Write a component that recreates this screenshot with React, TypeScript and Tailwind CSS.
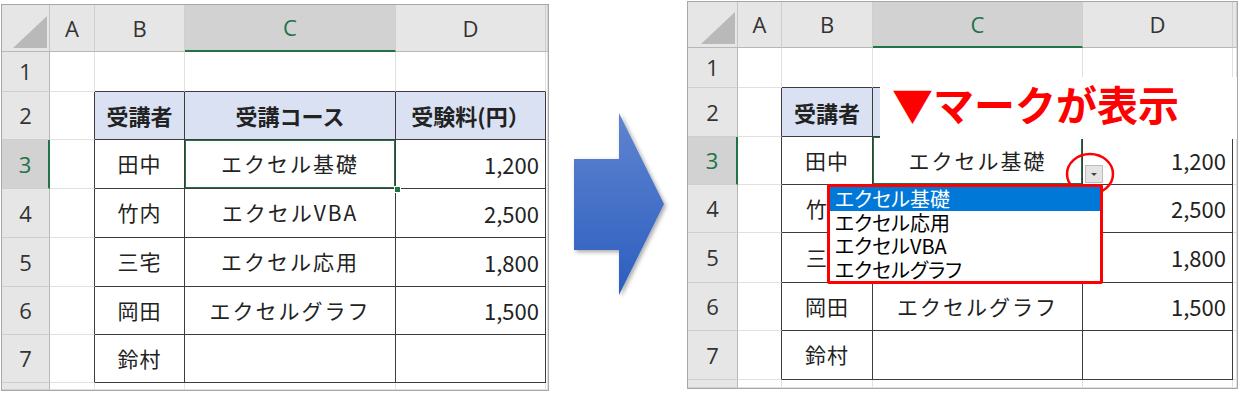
const names = ["田中", "竹内", "三宅", "岡田", "鈴村"];
const courses = ["エクセル基礎", "エクセルVBA", "エクセル応用", "エクセルグラフ", ""];
const fees = ["1,200", "2,500", "1,800", "1,500", ""];
const letters = ["", "A", "B", "C", "D", ""];
const options = ["エクセル基礎", "エクセル応用", "エクセルVBA", "エクセルグラフ"];

const jp = "font-['Noto_Sans_CJK_JP',sans-serif]";
const ui = "font-['Open_Sans','Noto_Sans_CJK_JP',sans-serif]";

function Corner() {
  return (
    <div className="flex h-full w-full items-end justify-end pb-[3px] pr-[2px]">
      <svg width="34" height="32" viewBox="0 0 34 32">
        <polygon points="0,32 34,32 34,0" fill="#b9b9b9" />
      </svg>
    </div>
  );
}

// rows 4-5 of the right sheet sit half under the open list
function Cell({ r, c, covered }: { r: number; c: number; covered?: boolean }) {
  const isHead = r === 0;
  const isRowHead = c === 0;
  const rightDark = r >= 2 && r <= 7 && c >= 1 && c <= 4;
  const bottomDark = r >= 1 && r <= 7 && c >= 2 && c <= 4;
  const tableHead = r === 2 && c >= 2 && c <= 4;
  const underList = covered && (r === 4 || r === 5);
  const underTitle = covered && r === 2 && c > 2;

  let cls = "relative flex items-center overflow-hidden ";
  let content: React.ReactNode = null;

  if (isHead && isRowHead) {
    cls += "border-r border-b border-r-[#c4c4c4] border-b-[#b8b8b8] bg-[#e6e6e6]";
    content = <Corner />;
  } else if (isHead) {
    const sel = c === 3;
    cls += `justify-center border-r border-r-[#cfcfcf] ${ui} text-[22px] ${
      sel
        ? "border-b-2 border-b-[#217346] bg-[#d2d2d2] text-[#217346]"
        : "border-b border-b-[#b8b8b8] bg-[#e6e6e6] text-[#333]"
    }`;
    content = letters[c];
  } else if (isRowHead) {
    const sel = r === 3;
    cls += `justify-center border-b border-b-[#cfcfcf] ${ui} text-[22px] ${
      sel
        ? "border-r-2 border-r-[#217346] bg-[#d2d2d2] text-[#217346]"
        : "border-r border-r-[#b8b8b8] bg-[#e6e6e6] text-[#333]"
    }`;
    content = r <= 7 ? String(r) : "";
  } else {
    cls += `border-r border-b ${jp} text-[#222] ${
      rightDark ? "border-r-[#3c3c3c]" : "border-r-[#e1e1e1]"
    } ${bottomDark ? "border-b-[#3c3c3c]" : "border-b-[#e1e1e1]"} ${
      tableHead ? "bg-[#d9e1f2]" : "bg-white"
    }`;
    if (tableHead) {
      if (!underTitle) {
        cls += " justify-center text-[22px] font-bold";
        content = c === 2 ? "受講者" : c === 3 ? "受講コース" : "受験料(円）";
      }
    } else if (r >= 3 && r <= 7) {
      const i = r - 3;
      if (c === 2) {
        if (underList) {
          cls += " justify-start pl-[24px] text-[21px]";
          content = names[i].slice(0, 1);
        } else {
          cls += " justify-center text-[21px] tracking-[1px]";
          content = names[i];
        }
      } else if (c === 3) {
        if (!underList) {
          cls += " justify-center text-[21px] tracking-[2px]";
          content = courses[i];
        }
      } else if (c === 4) {
        cls += " justify-end pr-[6px] text-[22px]";
        content = fees[i];
      }
    }
  }

  return (
    <div className={cls}>
      {content}
      {r === 3 && c === 3 && (
        <div className="absolute bottom-[-1px] left-[-1px] right-[-1px] top-[-1px] border-2 border-[#217346]" />
      )}
    </div>
  );
}

function Sheet({
  gridClass,
  covered,
  handle,
  children,
}: {
  gridClass: string;
  covered?: boolean;
  handle?: boolean;
  children?: React.ReactNode;
}) {
  const cells = [];
  for (let r = 0; r < 9; r++) {
    for (let c = 0; c < 6; c++) {
      cells.push(<Cell key={`${r}-${c}`} r={r} c={c} covered={covered} />);
    }
  }
  return (
    <div className={`relative grid shrink-0 border border-[#a8a8a8] bg-white ${gridClass}`}>
      {cells}
      {handle && (
        <div className="absolute left-[392px] top-[181px] h-[7px] w-[7px] border border-white bg-[#217346]" />
      )}
      {children}
    </div>
  );
}

function Arrow() {
  return (
    <svg width="138" height="394" viewBox="0 0 138 394" className="shrink-0">
      <defs>
        <linearGradient id="arrowFill" x1="0" y1="0" x2="0" y2="1">
          <stop offset="0" stopColor="#5f84d0" />
          <stop offset="1" stopColor="#2c5ebf" />
        </linearGradient>
        <filter id="arrowShadow" x="-20%" y="-20%" width="140%" height="140%">
          <feDropShadow dx="2" dy="2" stdDeviation="2" floodColor="#000" floodOpacity="0.35" />
        </filter>
      </defs>
      <polygon
        points="25,159 70,159 70,113 115,204 70,295 70,250 25,250"
        fill="url(#arrowFill)"
        filter="url(#arrowShadow)"
      />
    </svg>
  );
}

export default function App() {
  return (
    <div className="flex h-[394px] w-[1240px] items-start overflow-hidden bg-white">
      <div className="ml-[1px] mt-[4px]">
        <Sheet
          handle
          gridClass="grid-cols-[48px_45px_90px_211px_150px_2px] grid-rows-[47px_40px_48px_49px_49px_49px_48px_48px_7px]"
        />
      </div>

      <Arrow />

      <div className="mt-[1px]">
        <Sheet
          covered
          gridClass="grid-cols-[50px_44px_91px_210px_150px_4px] grid-rows-[46px_40px_49px_48px_48px_50px_48px_49px_8px]"
        >
          <div
            className={`absolute left-[192px] top-[75px] flex h-[62px] w-[357px] items-center bg-white pb-[10px] pl-[12px] ${jp} text-[41px] font-bold leading-none text-[#ff0000]`}
          >
            ▼マークが表示
          </div>

          <div className="absolute left-[397px] top-[163px] flex h-[18px] w-[18px] items-center justify-center border border-[#bcbcbc] bg-[#e4e4e4]">
            <div className="h-0 w-0 border-l-[3px] border-r-[3px] border-t-[3px] border-l-transparent border-r-transparent border-t-[#444]" />
          </div>

          <svg
            width="50"
            height="46"
            viewBox="0 0 50 46"
            className="absolute left-[377px] top-[149px]"
          >
            <ellipse cx="25" cy="23" rx="23" ry="20" fill="none" stroke="#ff0000" strokeWidth="2.5" />
          </svg>

          <div className="absolute left-[139px] top-[182px] h-[100px] w-[276px] overflow-hidden rounded-[2px] border-[3px] border-[#ff0000] bg-white">
            {options.map((o, i) => (
              <div
                key={o}
                className={`h-[23.5px] pl-[5px] ${jp} text-[20px] leading-[23px] [font-feature-settings:'palt'] ${
                  i === 0 ? "bg-[#0078d7] text-white" : "text-black"
                }`}
              >
                {o}
              </div>
            ))}
          </div>
        </Sheet>
      </div>
    </div>
  );
}
